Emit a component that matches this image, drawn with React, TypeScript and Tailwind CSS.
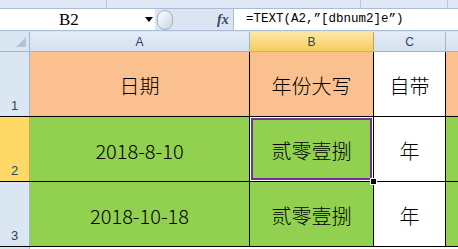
import React from 'react';

const cjk = { fontFamily: '"Noto Sans CJK SC", "Noto Sans", sans-serif' };

const ColHead: React.FC<{ label: string; w: string; active?: boolean }> = ({ label, w, active }) => (
    <div
        className={`${w} h-full shrink-0 flex items-center justify-center border-r text-[12px] text-[#2a4466] ${
            active
                ? 'bg-gradient-to-b from-[#fbe7a6] to-[#f7cd5a] border-[#c6a24a]'
                : 'bg-gradient-to-b from-[#e3ecf7] to-[#d5e1f0] border-[#9eb6ce]'
        }`}
    >
        {label}
    </div>
);

const RowHead: React.FC<{ n: number; active?: boolean }> = ({ n, active }) => (
    <div
        className={`w-[30px] h-full shrink-0 flex items-end justify-center pb-[1px] border-r text-[13px] text-[#2a4466] ${
            active ? 'bg-[#ffd966] border-[#d9a440]' : 'bg-[#dbe6f3] border-[#9eb6ce]'
        }`}
    >
        {n}
    </div>
);

const Cell: React.FC<{ w: string; bg: string; children?: React.ReactNode; selected?: boolean }> = ({ w, bg, children, selected }) => (
    <div className={`${w} ${bg} relative h-full shrink-0 flex items-center justify-center pt-[3px] border-r border-black text-[20px] font-light text-black`} style={cjk}>
        {children}
        {selected && (
            <>
                <div className="absolute inset-0 border border-white" />
                <div className="absolute inset-[1px] border-2 border-[#7030a0]" />
                <div className="absolute -right-[4px] -bottom-[4px] w-[7px] h-[7px] bg-black border border-white z-10" />
            </>
        )}
    </div>
);

const App: React.FC = () => {
    return (
        <div className="w-[458px] h-[249px] overflow-hidden bg-white flex flex-col" style={{ fontFamily: '"Liberation Sans", sans-serif' }}>
            {/* ribbon remainder */}
            <div className="h-[9px] shrink-0 flex bg-[#dfe8f4] border-b border-[#aabdd4]">
                <div className="w-[107px] border-r border-[#b9c9dc]" />
                <div className="w-[254px] border-r border-[#b9c9dc]" />
                <div className="w-[87px] border-r border-[#b9c9dc]" />
            </div>

            {/* formula bar */}
            <div className="h-[22px] shrink-0 flex bg-[#dbe5f1] border-b border-[#aabdd4]">
                <div className="w-[155px] bg-white flex items-center relative">
                    <span className="absolute left-[59px] text-[17px] text-black" style={{ fontFamily: '"Liberation Serif", serif' }}>B2</span>
                    <span className="absolute left-[145px] top-[8px] w-0 h-0 border-l-[4px] border-r-[4px] border-t-[5px] border-l-transparent border-r-transparent border-t-black" />
                </div>
                <div className="w-[78px] flex items-center relative">
                    <div className="ml-[2px] w-[16px] h-[20px] rounded-full border border-[#9fb2c8] bg-gradient-to-br from-white to-[#c9d5e3]" />
                    <span className="absolute left-[62px] text-[14px] font-bold italic text-[#2f4a6b]" style={{ fontFamily: '"Liberation Serif", serif' }}>fx</span>
                </div>
                <div className="flex-1 bg-white border-l border-[#aabdd4] flex items-center pl-[12px] text-[12.5px] text-black" style={{ fontFamily: '"Liberation Mono", monospace' }}>
                    =TEXT(A2,”[dbnum2]e”)
                </div>
            </div>

            {/* gap */}
            <div className="h-[1px] shrink-0 bg-[#dbe5f1]" />

            {/* column headers */}
            <div className="h-[20px] shrink-0 flex border-b border-[#9eb6ce]">
                <div className="w-[30px] h-full shrink-0 bg-[#dbe6f3] border-r border-[#9eb6ce] relative">
                    <div className="absolute right-[3px] bottom-[4px] w-0 h-0" style={{ borderBottom: '10px solid #b4c3d6', borderLeft: '10px solid transparent' }} />
                </div>
                <ColHead label="A" w="w-[220px]" />
                <ColHead label="B" w="w-[124px]" active />
                <ColHead label="C" w="w-[72px]" />
                <div className="flex-1 bg-gradient-to-b from-[#e3ecf7] to-[#d5e1f0]" />
            </div>

            {/* row 1 */}
            <div className="h-[65px] shrink-0 flex border-b border-black">
                <RowHead n={1} />
                <Cell w="w-[220px]" bg="bg-[#fac090]">日期</Cell>
                <Cell w="w-[124px]" bg="bg-[#fac090]">年份大写</Cell>
                <Cell w="w-[72px]" bg="bg-white">自带</Cell>
                <div className="flex-1 bg-[#fac090]" />
            </div>

            {/* row 2 */}
            <div className="h-[65px] shrink-0 flex border-b border-black">
                <RowHead n={2} active />
                <Cell w="w-[220px]" bg="bg-[#92d050]">2018-8-10</Cell>
                <Cell w="w-[124px]" bg="bg-[#92d050]" selected>贰零壹捌</Cell>
                <Cell w="w-[72px]" bg="bg-white">年</Cell>
                <div className="flex-1 bg-[#92d050]" />
            </div>

            {/* row 3 */}
            <div className="h-[65px] shrink-0 flex border-b border-black">
                <RowHead n={3} />
                <Cell w="w-[220px]" bg="bg-[#92d050]">2018-10-18</Cell>
                <Cell w="w-[124px]" bg="bg-[#92d050]">贰零壹捌</Cell>
                <Cell w="w-[72px]" bg="bg-white">年</Cell>
                <div className="flex-1 bg-[#92d050]" />
            </div>

            <div className="flex-1 flex">
                <div className="w-[30px] bg-[#dbe6f3] border-r border-[#9eb6ce]" />
                <div className="flex-1" />
            </div>
        </div>
    );
};

export default App;
